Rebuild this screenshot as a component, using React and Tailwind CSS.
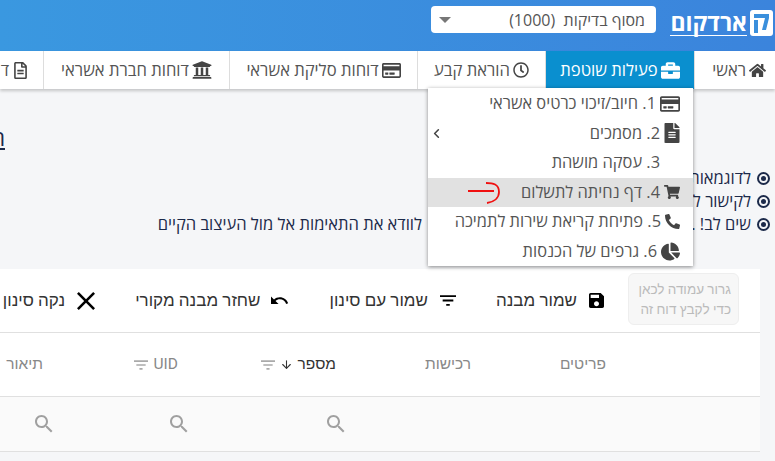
import { ChevronLeft, ArrowDown } from 'lucide-react'
import { FaHome, FaBriefcase, FaRegClock, FaRegCreditCard, FaUniversity, FaRegFileAlt, FaFileAlt, FaShoppingCart, FaPhone, FaChartPie } from 'react-icons/fa'

const tabs = [
  { label: 'ראשי', icon: FaHome, w: 'w-[81px] justify-start pr-[9px]', size: 'w-[17px] h-[17px]' },
  { label: 'פעילות שוטפת', icon: FaBriefcase, w: 'w-[149px] justify-center', size: 'w-[19px] h-[19px]', active: true },
  { label: 'הוראת קבע', icon: FaRegClock, w: 'w-[128px] justify-center', size: 'w-[16px] h-[16px]' },
  { label: 'דוחות סליקת אשראי', icon: FaRegCreditCard, w: 'w-[188px] justify-center', size: 'w-[19px] h-[19px]' },
  { label: 'דוחות חברת אשראי', icon: FaUniversity, w: 'w-[186px] justify-center', size: 'w-[20px] h-[20px]' },
  { label: 'דוחות', icon: FaRegFileAlt, w: 'w-[100px] justify-start pr-[14px]', size: 'w-[17px] h-[17px]' },
]

const menu = [
  { label: '1. חיוב/זיכוי כרטיס אשראי', icon: FaRegCreditCard, size: 'w-[20px] h-[20px]' },
  { label: '2. מסמכים', icon: FaFileAlt, size: 'w-[16px] h-[20px]', sub: true },
  { label: '3. עסקה מושהת' },
  { label: '4. דף נחיתה לתשלום', icon: FaShoppingCart, size: 'w-[16px] h-[16px]', active: true },
  { label: '5. פתיחת קריאת שירות לתמיכה', icon: FaPhone, size: 'w-[15px] h-[15px] -scale-x-100' },
  { label: '6. גרפים של הכנסות', icon: FaChartPie, size: 'w-[19px] h-[19px]' },
]

function FilterIcon({ className }) {
  return (
    <svg viewBox="3 6 18 12" className={className} fill="currentColor">
      <path d="M10 18h4v-2h-4v2zM3 6v2h18V6H3zm3 7h12v-2H6v2z" />
    </svg>
  )
}

function SearchIcon() {
  return (
    <svg viewBox="3 3 18 18" className="w-[18px] h-[18px] text-[#a0a0a0]" fill="currentColor">
      <path d="M15.5 14h-.79l-.28-.27C15.41 12.59 16 11.11 16 9.5 16 5.91 13.09 3 9.5 3S3 5.91 3 9.5 5.91 16 9.5 16c1.61 0 3.09-.59 4.23-1.57l.27.28v.79l5 4.99L20.49 19l-4.99-5zm-6 0C7.01 14 5 11.99 5 9.5S7.01 5 9.5 5 14 7.01 14 9.5 11.99 14 9.5 14z" />
    </svg>
  )
}

function Logo() {
  return (
    <div className="w-[103px] flex items-center gap-[3px] shrink-0">
      <svg viewBox="0 0 23 26" className="w-[23px] h-[26px] shrink-0">
        <rect width="23" height="26" rx="3" fill="#fff" />
        <path d="M4 4h15v4l-3 12h-4l3-12H4z" fill="#3a8fdc" />
        <rect x="4" y="10" width="4" height="13" fill="#3a8fdc" />
      </svg>
      <span className="text-white text-[23px] leading-[26px] font-bold border-b border-white whitespace-nowrap font-['Noto_Sans','Open_Sans',sans-serif]">ארדקום</span>
    </div>
  )
}

function Bullet() {
  return (
    <span className="w-[13px] h-[13px] rounded-full border-2 border-[#1c2a4a] flex items-center justify-center shrink-0">
      <span className="w-[5px] h-[5px] rounded-full bg-[#1c2a4a]" />
    </span>
  )
}

export default function App() {
  return (
    <div dir="rtl" className="relative w-[775px] h-[461px] overflow-hidden bg-[#f5f6f8] font-['Open_Sans','Noto_Sans',sans-serif]">
      {/* Top bar */}
      <header className="h-[51px] flex items-start pr-[2px] pt-[9px] gap-[14px] bg-gradient-to-l from-[#3b84dc] to-[#3a98e0]">
        <Logo />
        <div className="w-[225px] h-[27px] -mt-[3px] bg-white rounded-sm flex items-center justify-between pr-[11px] pl-[8px] text-[16px] text-[#555]">
          <span className="whitespace-pre">מסוף בדיקות  (1000)</span>
          <span className="w-0 h-0 border-x-[6px] border-x-transparent border-t-[6px] border-t-[#777]" />
        </div>
      </header>

      {/* Nav */}
      <nav className="h-[38px] bg-white flex shadow-[0_2px_3px_rgba(0,0,0,0.2)] relative">
        {tabs.map(({ label, icon: Icon, w, size, active }) => (
          <div key={label} className={`${w} shrink-0 h-full flex items-center gap-[3px] text-[16.6px] whitespace-nowrap border-l border-[#ddd] ${active ? 'bg-[#0a8fcf] text-white' : 'text-[#555]'}`}>
            <Icon className={`${size} shrink-0 ${active ? 'text-white' : 'text-[#444]'}`} />
            <span>{label}</span>
          </div>
        ))}
      </nav>

      {/* Intro */}
      <section className="pt-[36px] pr-[5px]">
        <div className="mr-[765px] whitespace-nowrap text-[22px] leading-[24px] text-[#1c2a4a] underline">חיוב</div>
        <div className="mt-[19px] flex flex-col gap-[3px] text-[16.5px] leading-[20px] text-[#1c2a4a]">
          <div className="flex items-center gap-[6px] whitespace-nowrap"><Bullet /><span>לדוגמאות נוספות ניתן לעיין במדריך</span></div>
          <div className="flex items-center gap-[6px] whitespace-nowrap"><Bullet /><span>לקישור לדף הנחיתה יש ללחוץ כאן</span></div>
          <div className="flex items-center gap-[6px] whitespace-nowrap">
            <Bullet />
            <span className="w-[323px] overflow-hidden shrink-0">שים לב! . יש לבדוק את הדף לפני הפרסום</span>
            <span>לוודא את התאימות אל מול העיצוב הקיים</span>
          </div>
        </div>
      </section>

      {/* Table card */}
      <section className="mt-[35px] mr-[15px] w-[760px] bg-white font-['Roboto','Noto_Sans',sans-serif]">
        <div className="h-[64px] flex items-center border-b border-[#e0e0e0] pr-[21px] text-[17px] text-[#333] whitespace-nowrap">
          <div className="w-[111px] h-[52px] shrink-0 -mt-[3px] rounded-md bg-[#f7f7f7] border border-[#eee] px-[7px] flex items-center text-[13.5px] leading-[20px] text-[#bbb]">
            גרור עמודה לכאן<br />כדי לקבץ דוח זה
          </div>
          <div className="flex items-center gap-[40px] mr-[24px]">
            <div className="flex items-center gap-[12px]">
              <svg viewBox="3 3 18 18" className="w-[15px] h-[15px] text-black" fill="currentColor"><path d="M17 3H5c-1.11 0-2 .9-2 2v14c0 1.1.89 2 2 2h14c1.1 0 2-.9 2-2V7l-4-4zm-5 16c-1.66 0-3-1.34-3-3s1.34-3 3-3 3 1.34 3 3-1.34 3-3 3zm3-10H5V5h10v4z" /></svg>
              <span>שמור מבנה</span>
            </div>
            <div className="flex items-center gap-[12px]">
              <FilterIcon className="w-[16px] h-[11px] text-black" />
              <span>שמור עם סינון</span>
            </div>
            <div className="flex items-center gap-[11px]">
              <svg viewBox="2 7 21.5 9.8" className="w-[18px] h-[9px] text-black" fill="currentColor"><path d="M12.5 8c-2.65 0-5.05.99-6.9 2.6L2 7v9h9l-3.62-3.62c1.39-1.16 3.16-1.88 5.12-1.88 3.54 0 6.55 2.31 7.6 5.5l2.37-.78C21.08 11.03 17.15 8 12.5 8z" /></svg>
              <span>שחזר מבנה מקורי</span>
            </div>
            <div className="flex items-center gap-[12px]">
              <svg viewBox="5 5 14 14" className="w-[18px] h-[18px] text-black" fill="currentColor"><path d="M19 6.41L17.59 5 12 10.59 6.41 5 5 6.41 10.59 12 5 17.59 6.41 19 12 13.41 17.59 19 19 17.59 13.41 12z" /></svg>
              <span>נקה סינון</span>
            </div>
          </div>
        </div>
        <div className="h-[64px] flex items-center border-b border-[#e0e0e0] pr-[154px] text-[15.5px] text-[#888] whitespace-nowrap">
          <div className="w-[135px] shrink-0">פריטים</div>
          <div className="w-[135px] shrink-0">רכישות</div>
          <div className="w-[158px] shrink-0 flex items-center gap-[5px] text-[#333]">
            <span>מספר</span>
            <ArrowDown className="w-[13px] h-[13px]" />
            <FilterIcon className="w-[14px] h-[10px] text-[#aaa]" />
          </div>
          <div className="w-[135px] shrink-0 flex items-center gap-[6px]">
            <span>UID</span>
            <FilterIcon className="w-[14px] h-[10px] text-[#aaa]" />
          </div>
          <div className="shrink-0 flex items-center gap-[6px]">
            <span>תיאור</span>
            <FilterIcon className="w-[14px] h-[10px] text-[#aaa]" />
          </div>
        </div>
        <div className="h-[55px] flex items-center border-b border-[#e0e0e0] bg-[#fafafa] pr-[415px]">
          <div className="w-[157px] shrink-0"><SearchIcon /></div>
          <div className="w-[135px] shrink-0"><SearchIcon /></div>
          <div className="w-[135px] shrink-0"><SearchIcon /></div>
        </div>
      </section>

      {/* Open dropdown */}
      <div className="absolute left-[428px] top-[88px] w-[265px] h-[178px] bg-white shadow-[0_1px_4px_rgba(0,0,0,0.45)] pt-[1px] text-[16.4px] text-[#555]">
        {menu.map(({ label, icon: Icon, size, sub, active }) => (
          <div key={label} className={`relative h-[29.5px] flex items-center gap-[4px] pr-[13px] whitespace-nowrap ${active ? 'bg-[#e1e1e1]' : ''}`}>
            {Icon ? <Icon className={`${size} text-[#444] shrink-0`} /> : <span className="w-[16px] shrink-0" />}
            <span>{label}</span>
            {sub && <ChevronLeft className="absolute left-[1px] top-[7px] w-[15px] h-[15px] text-[#444]" strokeWidth={2.5} />}
            {active && (
              <svg viewBox="0 0 32 22" className="absolute left-[40px] top-[4px] w-[32px] h-[22px]" fill="none" stroke="#f01010" strokeWidth="1.8">
                <path d="M0 9h26M18 1c7 0 13 1 13 9 0 6-5 10-12 11" />
              </svg>
            )}
          </div>
        ))}
      </div>
    </div>
  )
}
